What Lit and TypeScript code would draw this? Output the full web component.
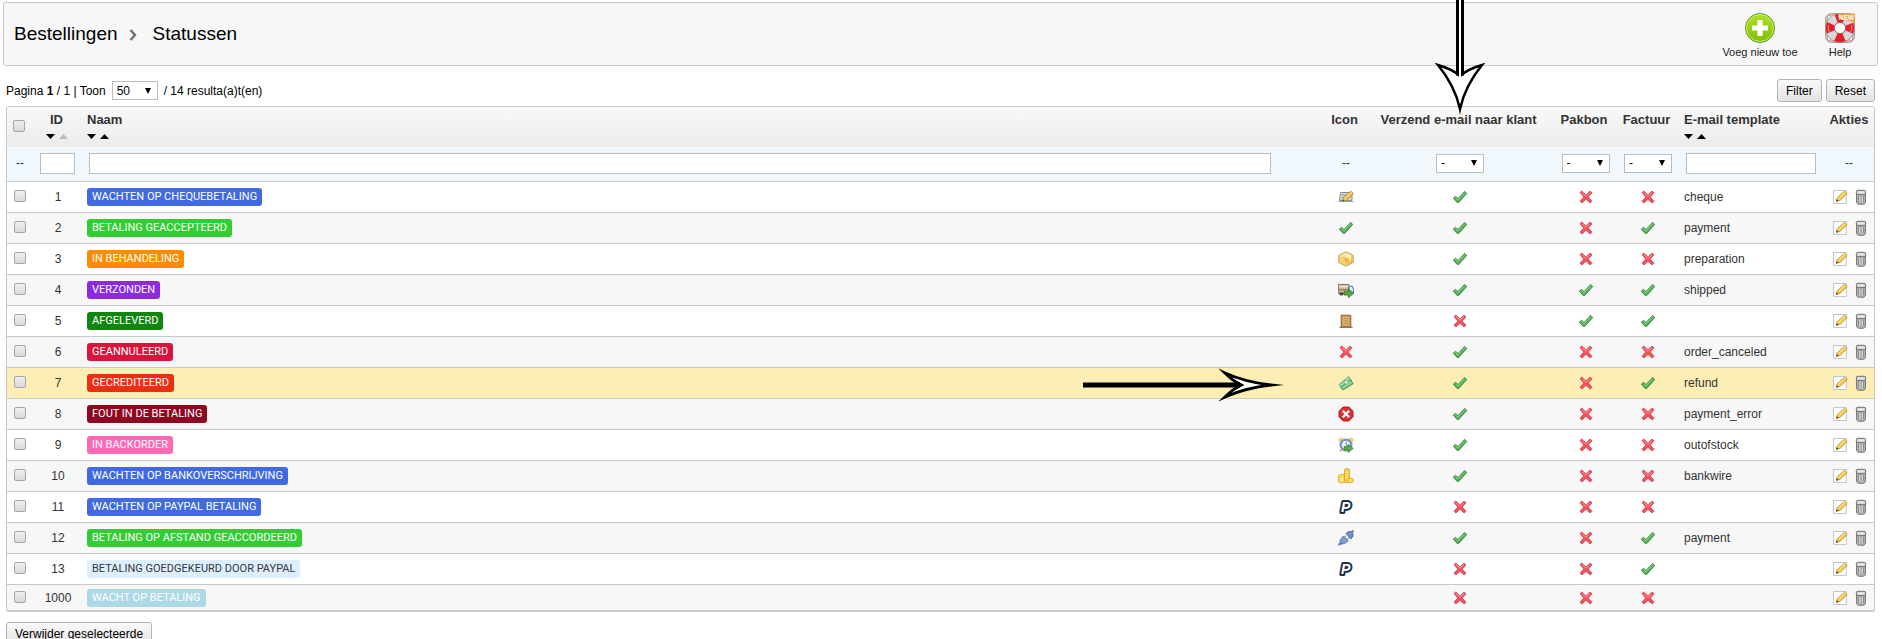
import { LitElement, html, css, svg, nothing, TemplateResult } from "lit";
import { customElement, property, state } from "lit/decorators.js";
import { classMap } from "lit/directives/class-map.js";
import { styleMap } from "lit/directives/style-map.js";

interface OrderStatus {
  id: number;
  name: string;
  color: string;
  dark?: boolean;
  icon: string;
  email: boolean;
  slip: boolean;
  invoice: boolean;
  template: string;
}

const row = (
  id: number,
  name: string,
  color: string,
  icon: string,
  flags: string,
  template = "",
  dark = false
): OrderStatus => ({
  id,
  name,
  color,
  icon,
  template,
  dark,
  email: flags[0] === "1",
  slip: flags[1] === "1",
  invoice: flags[2] === "1",
});

const STATUSES: OrderStatus[] = [
  row(1, "Wachten op chequebetaling", "#4169e1", "cheque", "100", "cheque"),
  row(2, "Betaling geaccepteerd", "#32cd32", "check", "101", "payment"),
  row(3, "In behandeling", "#ff8c00", "box", "100", "preparation"),
  row(4, "Verzonden", "#8a2be2", "truck", "111", "shipped"),
  row(5, "Afgeleverd", "#108510", "door", "011"),
  row(6, "Geannuleerd", "#dc143c", "cross", "100", "order_canceled"),
  row(7, "Gecrediteerd", "#ec2e15", "money", "101", "refund"),
  row(8, "Fout in de betaling", "#8f0621", "error", "100", "payment_error"),
  row(9, "In backorder", "#ff69b4", "clock", "100", "outofstock"),
  row(10, "Wachten op bankoverschrijving", "#4169e1", "coins", "100", "bankwire"),
  row(11, "Wachten op PayPal betaling", "#4169e1", "paypal", "000"),
  row(12, "Betaling op afstand geaccordeerd", "#32cd32", "plug", "101", "payment"),
  row(13, "Betaling goedgekeurd door PayPal", "#ddeeff", "paypal", "001", "", true),
  row(1000, "Wacht op betaling", "#add8e6", "", "000"),
];

const ICONS: Record<string, TemplateResult> = {
  check: svg`
    <path d="M1.400 9.200 3.400 7.200 6 9.600 12.600 2.400 14.800 4.400 6.600 13.600H5.200Z" fill="#55ad57" stroke="#3c8a42" stroke-width=".9" stroke-linejoin="round"/>
    <path d="M3.300 8.600 5.900 11 12.700 3.700" fill="none" stroke="#93d593" stroke-width="1"/>`,
  cross: svg`
    <path d="M2 3.600 3.800 2 8 5.900 12 2 14 3.800 10.300 8.100 14 12.200 12.200 14 8 10.300 4 14 2 12.200 5.700 8.100Z" fill="#f2525c" stroke="#cf4350" stroke-width=".8" stroke-linejoin="round"/>
    <path d="M3.800 3.600 8 7.200 12.100 3.600" fill="none" stroke="#fa9a9c" stroke-width="1"/>`,
  cheque: svg`
    <path d="M2.500 3.500h11.500v8h-12.500z" fill="#d3d3d3" stroke="#8c8c8c"/>
    <path d="M.5 12.500h14.700" stroke="#9aa5b0"/>
    <path d="M4 6h5M4 8.500h3" stroke="#959595"/>
    <path d="M4.400 12.600 5.400 9 12.800 2.200 15.400 4.600 8.200 11.600Z" fill="#f4c24d" stroke="#b98027" stroke-width=".8" stroke-linejoin="round"/>
    <path d="M6.400 9.600 13.600 3.400" stroke="#fde59b"/>
    <path d="m4.400 12.600.5-2 1.700 1.300Z" fill="#4b3a26"/>`,
  box: svg`
    <path d="M8 .8 15.200 4.400v7L8 15.200.8 11.400v-7Z" fill="#f6d277" stroke="#c8922f" stroke-width=".9" stroke-linejoin="round"/>
    <path d="M8 1.400 14.500 4.700 8 8 1.500 4.700Z" fill="#fbe2a0"/>
    <path d="M8 8v6.600l6.400-3.400V4.800Z" fill="#f0bf57"/>
    <path d="m5 3 6 3.200v3.400l2-1V5.200L7.200 2Z" fill="#fff3c9"/>
    <path d="M5 6.200 8 8v2.600" fill="none" stroke="#d79d35"/>`,
  truck: svg`
    <path d="M.6 2.400h10v8.800H.6z" fill="#cdbb93" stroke="#77705f" stroke-width=".9"/>
    <path d="M1 4.600h9.400" stroke="#f3ead1" stroke-width="1.400"/>
    <path d="M1 7.800h9.400" stroke="#766a55" stroke-width="1"/>
    <path d="M11 4.200h3.400l1 3.200v4H11z" fill="#e3edf8" stroke="#3f6cae" stroke-width="1"/>
    <path d="M.8 11.600h7" stroke="#4a4a4a" stroke-width="1.400"/>
    <circle cx="3.400" cy="12" r="1.700" fill="#484848"/>
    <path d="M6.200 9.400h4.200V7l5.200 4.300-5.200 4.500v-2.700H6.200Z" fill="#57ab3c" stroke="#2f7a25" stroke-width=".8" stroke-linejoin="round"/>`,
  door: svg`
    <path d="M3.200 2.200h9.600v11.600H3.200z" fill="#c08c50" stroke="#936431"/>
    <path d="M4.400 3.400h7.200v9.800H4.400z" fill="#d9ab6d"/>
    <path d="M6 5.400h4M6 8h4M6 10.600h4" stroke="#c29353"/>
    <path d="M1.400 14.300h13.200" stroke="#7c5d3a"/>`,
  money: svg`
    <path d="M1 9.600 10.600 1.400l3.200 4.600L4.400 14.400Z" fill="#a6d8ad" stroke="#5ea36b" stroke-width=".9" stroke-linejoin="round"/>
    <path d="M2.600 12.400 12.400 4.600l2.800 4.200-10 6.200Z" fill="#7cc48a" stroke="#4c9560" stroke-width=".9" stroke-linejoin="round"/>
    <path d="M5 12.600 13 7.200" stroke="#b5e2bb" stroke-width=".9"/>
    <ellipse cx="8.300" cy="7.400" rx="2.300" ry="1.800" fill="#d6f0d6" stroke="#5ea36b" stroke-width=".7"/>`,
  error: svg`
    <path d="M5.200 1h5.600L15 5.200v5.600L10.800 15H5.200L1 10.800V5.200Z" fill="#dc2f33" stroke="#b71b22" stroke-linejoin="round"/>
    <path d="m4.800 4.800 6.400 6.400m0-6.400-6.400 6.400" stroke="#fff" stroke-width="2.300"/>`,
  clock: svg`
    <circle cx="3" cy="3" r="2.500" fill="#f4cf63"/><circle cx="13" cy="3" r="2.500" fill="#f4cf63"/>
    <path d="m3.600 12.200-1.200 2.200" stroke="#e3b748" stroke-width="2"/>
    <circle cx="8" cy="8" r="5.400" fill="#eef5fd" stroke="#6f93d0" stroke-width="2.200"/>
    <path d="M8 4.600V8l2 1" fill="none" stroke="#6d7f99" stroke-width=".9"/>
    <path d="M6.200 9.600h4V7.300l5 4.100-5 4.100v-2.200h-4Z" fill="#5fa84b" stroke="#37803a" stroke-width=".8" stroke-linejoin="round"/>`,
  coins: svg`
    <path d="M.7 7.400c0-1.200 6-1.200 6 0v6.400c0 1.400-6 1.400-6 0Z" fill="#fbdf63" stroke="#d9a21f" stroke-width=".9"/>
    <path d="M6.400 1.600c0-1.200 5-1.200 5 0v11.800c0 1.400-5 1.400-5 0Z" fill="#f8cf45" stroke="#d9a21f" stroke-width=".9"/>
    <path d="M10 11.400c0-1.400 5.400-1.400 5.400 0v2c0 1.600-5.400 1.600-5.400 0Z" fill="#fbdf63" stroke="#d9a21f" stroke-width=".9"/>
    <path d="M7.600 4.400h2.600M7.600 7h2.600M7.600 9.600h2.200M2 10.600h3M2 12.600h3" stroke="#fff0a0"/>`,
  paypal: svg`
    <text x="3" y="13" font-family="Liberation Sans, sans-serif" font-size="14" font-weight="700" font-style="italic" fill="#fff" stroke="#1c2f4c" stroke-width="4" stroke-linejoin="round" paint-order="stroke">P</text>`,
  plug: svg`
    <path d="m1.400 14.400 2.400-2.200" stroke="#6a88b8" stroke-width="2.600" stroke-linecap="round"/>
    <path d="M2 10.400 5.400 6l4.800 4.800-3.600 2.800-3.600.4Z" fill="#7c9fd6" stroke="#4a6fa9" stroke-width=".9" stroke-linejoin="round"/>
    <path d="m6.600 7.400 1.600-1.800M9 9.600l1.600-1.600" stroke="#8a96a8" stroke-width="1.200"/>
    <path d="m8 3.400 2.600-1.800 3.600.2L15.200 6l-2.400 3Z" fill="#6f93cf" stroke="#41659f" stroke-width=".9" stroke-linejoin="round"/>
    <path d="m13.800 2.200 1.200-1" stroke="#6a88b8" stroke-width="2.200" stroke-linecap="round"/>`,
  edit: svg`
    <path d="M1.500 1.500h12.800v13H1.500z" fill="#fdfdfd" stroke="#c3c5ca"/>
    <path d="M4.400 12.200 5.200 8.800 12.600 2.200 15.200 4.600 8 11.400Z" fill="#f5cb4f" stroke="#b78a2e" stroke-width=".8" stroke-linejoin="round"/>
    <path d="M6.400 9.400 13.200 3.400" stroke="#fdeb9f"/>
    <path d="m4 12.800.6-2.600 2 1.800Z" fill="#4e4434"/>`,
  trash: svg`
    <path d="M3.600 4.600h8.800v8.600c0 1.600-1.400 2.100-4.400 2.100s-4.400-.5-4.400-2.100Z" fill="#b5b5b5" stroke="#737373"/>
    <path d="M5.600 7v6.200M8 7v6.600M10.400 7v6.200" stroke="#8a8a8a"/>
    <path d="M6.800 7v6.400M9.200 7v6.400" stroke="#dedede"/>
    <rect x="3.300" y="1.300" width="9.400" height="4.400" rx="1.600" fill="#d4d4d4" stroke="#6e6e6e"/>
    <path d="M5.400 3.200h5.200" stroke="#f3f3f3"/>`,
};

const icon = (name: string, cls = "icon") =>
  html`<svg class=${cls} viewBox="0 0 16 16" aria-hidden="true">${ICONS[name]}</svg>`;

@customElement("status-flag")
class StatusFlag extends LitElement {
  @property({ type: Boolean }) on = false;

  static styles = css`
    :host {
      display: inline-flex;
    }
    .toggle {
      display: flex;
      padding: 0;
      border: 0;
      background: none;
      cursor: pointer;
    }
    .icon {
      width: 16px;
      height: 16px;
    }
  `;

  render() {
    return html`<button
      class="toggle"
      type="button"
      aria-label=${this.on ? "Ingeschakeld" : "Uitgeschakeld"}
      @click=${() => (this.on = !this.on)}
    >
      ${icon(this.on ? "check" : "cross")}
    </button>`;
  }
}

@customElement("app-root")
class AppRoot extends LitElement {
  @state() private highlighted = 7;

  static styles = css`
    :host {
      display: block;
      position: relative;
      font: 12px/16px "Liberation Sans", Arial, sans-serif;
      color: #333;
      background: #fff;
      --line: #c6c8ca;
    }
    * {
      box-sizing: border-box;
    }
    a {
      color: inherit;
      text-decoration: none;
    }
    .page {
      padding: 2px 4px 0 3px;
    }
    .masthead {
      display: flex;
      justify-content: space-between;
      align-items: center;
      height: 64px;
      padding: 0 8px 0 10px;
      border: 1px solid var(--line);
      border-radius: 3px;
      background: #f7f7f7;
      color: #000;
    }
    .title {
      display: flex;
      align-items: center;
      margin: 0;
      font-size: 19px;
      line-height: 24px;
      font-weight: 400;
    }
    .chevron {
      width: 8px;
      height: 12px;
      margin: 2px 16px 0 11px;
    }
    .tools {
      display: flex;
      margin: 0;
      padding: 3px 0 0;
      list-style: none;
    }
    .tool {
      display: flex;
      flex-direction: column;
      align-items: center;
      width: 102px;
      font-size: 11px;
      line-height: 16px;
      white-space: nowrap;
      color: #222;
    }
    .tools li:last-child .tool {
      width: 58px;
    }
    .tool svg {
      width: 32px;
      height: 32px;
    }
    .bar {
      display: flex;
      justify-content: space-between;
      align-items: center;
      padding: 13px 3px 4px 3px;
      color: #000;
    }
    .pager {
      display: flex;
      align-items: center;
      gap: 6px;
    }
    .buttons {
      display: flex;
      gap: 4px;
    }
    .btn {
      height: 23px;
      padding: 0 8px;
      border: 1px solid #b4b4b4;
      border-radius: 3px;
      background: linear-gradient(#f9f9f9, #e3e3e3);
      font: inherit;
      color: #000;
    }
    .select,
    .field {
      border: 1px solid #b9bcc0;
      border-radius: 0;
      background-color: #fff;
      font: inherit;
      color: #000;
    }
    .select {
      appearance: none;
      width: 48px;
      height: 19px;
      padding: 0 4px;
      background-image: url("data:image/svg+xml,%3Csvg xmlns='http://www.w3.org/2000/svg' viewBox='0 0 6 6'%3E%3Cpath d='M0 0h6L3 6z'/%3E%3C/svg%3E");
      background-repeat: no-repeat;
      background-position: right 6px center;
      background-size: 6px 6px;
    }
    .pager .select {
      width: 46px;
    }
    .field {
      display: block;
      width: 100%;
      height: 21px;
      padding: 0 4px;
    }
    .frame {
      margin: 0 3px;
      border: 1px solid var(--line);
      border-bottom-width: 2px;
      border-radius: 3px;
      overflow: hidden;
    }
    .grid {
      width: 100%;
      table-layout: fixed;
      border-collapse: separate;
      border-spacing: 0;
    }
    .c-tick { width: 26px; }
    .c-id { width: 50px; }
    .c-icon { width: 48px; }
    .c-mail { width: 180px; }
    .c-slip { width: 71px; }
    .c-invoice { width: 54px; }
    .c-template { width: 149px; }
    .c-actions { width: 50px; }
    th,
    td {
      padding: 0;
      text-align: center;
      vertical-align: middle;
      white-space: nowrap;
    }
    .left {
      text-align: left;
      padding-left: 4px;
    }
    .template {
      padding-left: 9px;
    }
    .heads {
      background: linear-gradient(#f9f9f9, #ebebeb);
    }
    .heads th {
      height: 40px;
      padding-top: 5px;
      padding-right: 3px;
      vertical-align: top;
      font-size: 13px;
      line-height: 16px;
      font-weight: 700;
    }
    .heads .all {
      padding-top: 13px;
      padding-right: 2px;
    }
    .heads .last {
      padding-right: 0;
    }
    .sort {
      display: flex;
      gap: 4px;
      padding-top: 6px;
    }
    .center {
      justify-content: center;
    }
    .sort a {
      display: flex;
    }
    .sort svg {
      width: 9px;
      height: 5px;
    }
    .off {
      opacity: 0.2;
    }
    .filters td {
      height: 35px;
      padding-bottom: 2px;
      border-bottom: 1px solid #c3ccd4;
      background: #f0f8fe;
    }
    .filters .c-name-cell {
      padding: 0 51px 2px 6px;
    }
    .filters .c-id-cell {
      padding: 0 8px 2px 7px;
    }
    .filters .c-template-cell {
      padding: 0 8px 2px 11px;
    }
    .rows td {
      height: 31px;
      border-bottom: 1px solid var(--line);
    }
    .rows tr:nth-child(even) td {
      background: #f7f7f7;
    }
    .rows tr.hot td {
      background: #fdeeb5;
    }
    .rows tr:last-child td {
      height: 25px;
      border-bottom: 0;
    }
    .rows td:first-child {
      padding-bottom: 2px;
    }
    .tick {
      appearance: none;
      display: block;
      width: 12px;
      height: 12px;
      margin: 0 auto;
      border: 1px solid #a6a6a6;
      border-radius: 2px;
      background: linear-gradient(#efefef, #d9d9d9);
    }
    .tick:checked {
      background: #6a8fd8;
    }
    .badge {
      display: inline-block;
      padding: 0 5px;
      border-radius: 3px;
      font-family: Roboto, "Liberation Sans", sans-serif;
      font-size: 11px;
      line-height: 18px;
      text-transform: uppercase;
      color: #fff;
      vertical-align: middle;
    }
    .badge.dark {
      color: #383838;
    }
    .icon,
    status-flag {
      vertical-align: middle;
    }
    .icon {
      width: 16px;
      height: 16px;
    }
    .actions {
      display: flex;
      justify-content: flex-end;
      gap: 5px;
      padding-right: 5px;
    }
    .actions a {
      display: flex;
    }
    .foot {
      padding: 10px 3px 0;
    }
    .pointer {
      position: absolute;
      pointer-events: none;
    }
    .pointer.down {
      top: 0;
      right: 396px;
      width: 52px;
      height: 116px;
    }
    .pointer.across {
      top: 368px;
      right: 596px;
      width: 204px;
      height: 34px;
    }
  `;

  private tick(id: string, label: string) {
    return html`<input class="tick" type="checkbox" id=${id} aria-label=${label} />`;
  }

  private choice(label: string) {
    return html`<select class="select" aria-label=${label}>
      <option>-</option>
      <option>Ja</option>
      <option>Nee</option>
    </select>`;
  }

  private sorter(centered: boolean, current: boolean) {
    return html`<span class=${classMap({ sort: true, center: centered })}>
      <a href="#aflopend" aria-label="Aflopend sorteren"
        ><svg viewBox="0 0 9 5"><path d="M0 0h9L4.500 5z" /></svg
      ></a>
      <a href="#oplopend" aria-label="Oplopend sorteren" class=${classMap({ off: current })}
        ><svg viewBox="0 0 9 5"><path d="M0 5h9L4.500 0z" /></svg
      ></a>
    </span>`;
  }

  private statusRow(s: OrderStatus) {
    return html`<tr class=${classMap({ hot: s.id === this.highlighted })}>
      <td>${this.tick(`s${s.id}`, s.name)}</td>
      <td>${s.id}</td>
      <td class="left">
        <span
          class=${classMap({ badge: true, dark: !!s.dark })}
          style=${styleMap({ backgroundColor: s.color })}
          >${s.name}</span
        >
      </td>
      <td>${s.icon ? icon(s.icon) : nothing}</td>
      <td><status-flag ?on=${s.email}></status-flag></td>
      <td><status-flag ?on=${s.slip}></status-flag></td>
      <td><status-flag ?on=${s.invoice}></status-flag></td>
      <td class="left template">${s.template}</td>
      <td>
        <div class="actions">
          <a href="#bewerk-${s.id}" aria-label="Bewerk">${icon("edit")}</a>
          <a href="#verwijder-${s.id}" aria-label="Verwijder">${icon("trash")}</a>
        </div>
      </td>
    </tr>`;
  }

  private addIcon() {
    return html`<svg viewBox="0 0 32 32" aria-hidden="true">
      <defs>
        <linearGradient id="lime" x2="0" y2="1">
          <stop stop-color="#b3e02c" />
          <stop offset="1" stop-color="#7cc000" />
        </linearGradient>
      </defs>
      <circle cx="16" cy="16" r="14.500" fill="url(#lime)" stroke="#5f9a1c" />
      <circle cx="16" cy="16" r="13.400" fill="none" stroke="#cdea7a" />
      <path d="M13.500 8h5v5.500H24v5h-5.500V24h-5v-5.500H8v-5h5.500z" fill="#fff" />
    </svg>`;
  }

  private helpIcon() {
    return html`<svg viewBox="0 0 32 32" aria-hidden="true">
      <rect x="1.500" y="1.500" width="29" height="29" rx="6" fill="#f1efee" stroke="#a9a5a2" />
      <path d="M3 10V5l2-2h5M22 29h5l2-2v-5M3 22v5l2 2h5" fill="none" stroke="#cf7d62" />
      <circle cx="16" cy="16" r="10" fill="none" stroke="#8d8d8d" stroke-width="9.600" />
      <circle cx="16" cy="16" r="10" fill="none" stroke="#d5d8da" stroke-width="8.400" />
      <circle
        cx="16" cy="16" r="10" fill="none" stroke="#e3202a" stroke-width="8.400"
        stroke-dasharray="8.400 7.308" stroke-dashoffset="4.200"
      />
      <path d="M4.500 13q-1 4 1 7M27.500 13q1 4-1 7" fill="none" stroke="#ff7b72" stroke-width="1.200" />
      <circle cx="16" cy="16" r="5.600" fill="#fbfbfb" stroke="#a04040" stroke-width=".8" />
      <path d="M14 1.500h17V11q-3-2.500-8-2.500-6 0-9-3z" fill="#f0a040" />
      <text x="15" y="8" font-family="Liberation Sans, sans-serif" font-size="6.500" font-weight="700" fill="#fff">NEW</text>
    </svg>`;
  }

  render() {
    return html`
      <div class="page">
        <header class="masthead">
          <h1 class="title">
            Bestellingen
            <svg class="chevron" viewBox="0 0 8 12" aria-hidden="true">
              <path d="M1.500 1 6 6l-4.500 5" fill="none" stroke="#6f6f6f" stroke-width="2.400" />
            </svg>
            Statussen
          </h1>
          <ul class="tools">
            <li><a class="tool" href="#nieuw">${this.addIcon()}Voeg nieuw toe</a></li>
            <li><a class="tool" href="#help">${this.helpIcon()}Help</a></li>
          </ul>
        </header>

        <div class="bar">
          <div class="pager">
            <label for="size">Pagina <b>1</b> / 1 | Toon</label>
            <select class="select" id="size">
              <option>20</option>
              <option selected>50</option>
              <option>100</option>
            </select>
            <span>/ 14 resulta(a)t(en)</span>
          </div>
          <div class="buttons">
            <button class="btn" type="button">Filter</button>
            <button class="btn" type="button">Reset</button>
          </div>
        </div>

        <div class="frame">
          <table class="grid">
            <colgroup>
              <col class="c-tick" />
              <col class="c-id" />
              <col />
              <col class="c-icon" />
              <col class="c-mail" />
              <col class="c-slip" />
              <col class="c-invoice" />
              <col class="c-template" />
              <col class="c-actions" />
            </colgroup>
            <thead>
              <tr class="heads">
                <th class="all">${this.tick("all", "Alles selecteren")}</th>
                <th>ID${this.sorter(true, true)}</th>
                <th class="left">Naam${this.sorter(false, false)}</th>
                <th>Icon</th>
                <th>Verzend e-mail naar klant</th>
                <th>Pakbon</th>
                <th>Factuur</th>
                <th class="left template">E-mail template${this.sorter(false, false)}</th>
                <th class="last">Akties</th>
              </tr>
              <tr class="filters">
                <td>--</td>
                <td class="c-id-cell"><input class="field" type="text" aria-label="ID" /></td>
                <td class="c-name-cell"><input class="field" type="text" aria-label="Naam" /></td>
                <td>--</td>
                <td>${this.choice("Verzend e-mail naar klant")}</td>
                <td>${this.choice("Pakbon")}</td>
                <td>${this.choice("Factuur")}</td>
                <td class="c-template-cell">
                  <input class="field" type="text" aria-label="E-mail template" />
                </td>
                <td>--</td>
              </tr>
            </thead>
            <tbody class="rows">
              ${STATUSES.map((s) => this.statusRow(s))}
            </tbody>
          </table>
        </div>

        <div class="foot">
          <button class="btn" type="button">Verwijder geselecteerde</button>
        </div>
      </div>

      <svg class="pointer down" viewBox="0 0 52 116" aria-hidden="true">
        <path
          d="M4 65q14 4 22 11 8-7 22-11-17 21-22 44Q21 86 4 65Z"
          fill="#fff" stroke="#000" stroke-width="2.500" stroke-miterlimit="8"
        />
        <path d="M23.500 0v75.500M28.500 0v75.500" stroke="#000" stroke-width="3" />
        <path d="M26 0v78" stroke="#fff" stroke-width="2" />
      </svg>
      <svg class="pointer across" viewBox="0 0 204 34" aria-hidden="true">
        <path
          d="M143 5q8 8 16 12-8 4-16 12 20-9 46-12-26-3-46-12Z"
          fill="#fff" stroke="#000" stroke-width="3" stroke-miterlimit="12"
        />
        <path d="M1 17h157" stroke="#000" stroke-width="5" />
        <path d="m153 12 9 5-9 5z" />
      </svg>
    `;
  }
}
